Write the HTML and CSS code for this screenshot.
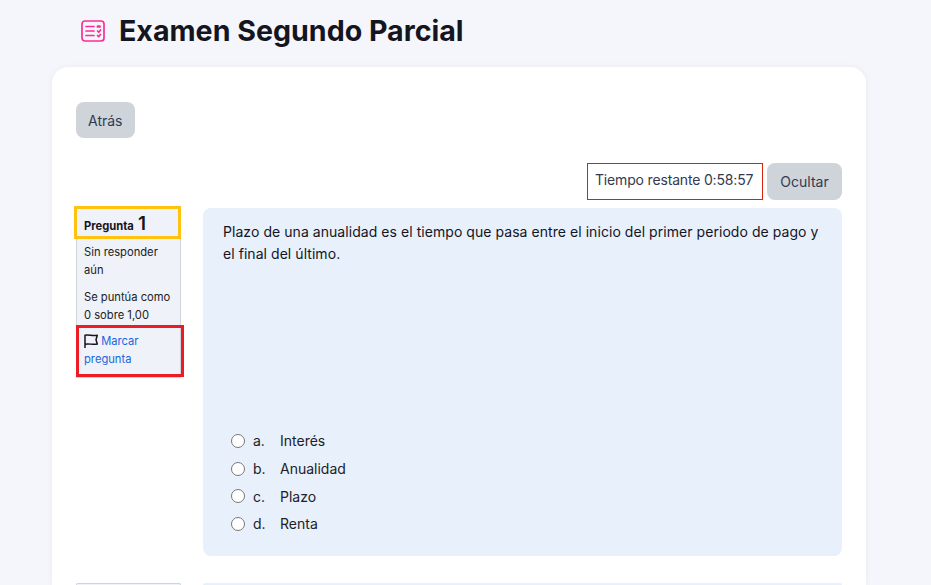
FILE: index.html
```html
<!DOCTYPE html>
<html lang="es">
<head>
  <meta charset="UTF-8">
  <title>Examen Segundo Parcial</title>
  <link rel="stylesheet" href="styles.css">
</head>
<body>
  <header class="page-header">
    <svg class="page-icon" viewBox="0 0 24 24" fill="none" stroke="#fb2d96" stroke-width="1.700" stroke-linecap="round" stroke-linejoin="round">
      <rect x="1" y="2" width="22" height="20" rx="3"/>
      <path d="M5 7.500h8M5 12h8M5 16.500h8"/>
      <path d="M16.500 7h2.500v1h-2.500z" fill="#fb2d96"/>
      <path d="M16.500 12l1.200 1.200 1.800-2.200M16.500 16.500l1.200 1.200 1.800-2.200"/>
    </svg>
    <h1>Examen Segundo Parcial</h1>
  </header>

  <main class="card">
    <div class="back-row">
      <a class="btn" href="#">Atrás</a>
    </div>

    <div class="timer-row">
      <div class="timer">Tiempo restante 0:58:57</div>
      <button class="btn" type="button">Ocultar</button>
    </div>

    <section class="question">
      <div class="info">
        <div class="info-head">
          <span class="info-label">Pregunta</span> <span class="info-num">1</span>
          <span class="mark mark-yellow"></span>
        </div>
        <div class="info-text">
          <p>Sin responder aún</p>
          <p>Se puntúa como 0 sobre 1,00</p>
        </div>
        <div class="info-flag">
          <svg class="flag" viewBox="0 0 14 14" fill="none" stroke="#14151f" stroke-width="1.500" stroke-linejoin="round">
            <path d="M1 14V1.200C5 .2 9 2.500 13.300 1.200L12 5.800l1.300 4.200C9 11.300 5 9 1 10.200"/>
          </svg>
          <a href="#">Marcar pregunta</a>
          <span class="mark mark-red"></span>
        </div>
      </div>

      <div class="content">
        <p class="q-text">Plazo de una anualidad es el tiempo que pasa entre el inicio del primer periodo de pago y el final del último.</p>
        <div class="answers">
          <label class="answer"><input type="radio" name="q1"><span class="letter">a.</span>Interés</label>
          <label class="answer"><input type="radio" name="q1"><span class="letter">b.</span>Anualidad</label>
          <label class="answer"><input type="radio" name="q1"><span class="letter">c.</span>Plazo</label>
          <label class="answer"><input type="radio" name="q1"><span class="letter">d.</span>Renta</label>
        </div>
      </div>
    </section>

    <section class="question question-next">
      <div class="info info-next"></div>
      <div class="content content-next"></div>
    </section>
  </main>
</body>
</html>
```

FILE: styles.css
```css
html, body {
  height: 585px;
  overflow: hidden;
}

body {
  margin: 0;
  background: #f5f6fb;
  font-family: 'Inter', sans-serif;
  font-size: 14px;
  color: #1d2125;
}

.page-header {
  display: flex;
  align-items: center;
  gap: 14px;
  height: 67px;
  padding-left: 81px;
  padding-bottom: 6px;
  box-sizing: border-box;
}

.page-icon {
  width: 24px;
  height: 24px;
}

.page-header h1 {
  margin: 0;
  font-size: 28.600px;
  font-weight: 700;
  color: #14151f;
}

.card {
  width: 814px;
  margin-left: 52px;
  padding: 35px 24px 0;
  box-sizing: border-box;
  height: 518px;
  overflow: hidden;
  background: #fff;
  border-radius: 16px 16px 0 0;
  box-shadow: 0 0 6px rgba(30, 40, 80, 0.05);
}

.btn {
  display: inline-block;
  padding: 0 12px;
  height: 36px;
  line-height: 37px;
  background: #ced4da;
  color: #343a50;
  font-family: inherit;
  font-size: 14px;
  border: none;
  border-radius: 8px;
  text-decoration: none;
  box-sizing: border-box;
}

.timer-row {
  display: flex;
  justify-content: flex-end;
  gap: 4px;
  margin-top: 25px;
}

.timer-row .btn {
  height: 37px;
  line-height: 37px;
  width: 75px;
  padding: 0;
}

.timer {
  width: 176px;
  height: 37px;
  line-height: 32px;
  box-sizing: border-box;
  padding-left: 7px;
  border: 1px solid #d9230f;
  color: #343a50;
  letter-spacing: -0.170px;
}

.question {
  display: flex;
  gap: 22px;
  margin-top: 8px;
  margin-bottom: 27px;
}

.question-next {
  margin-bottom: 0;
}

.info {
  width: 105px;
  align-self: flex-start;
  box-sizing: border-box;
  background: #eff2f8;
  border: 1px solid #ced4da;
  border-top: none;
  font-size: 11.200px;
  line-height: 18px;
}

.info-head {
  position: relative;
  height: 30px;
  padding: 9px 7px 0;
  box-sizing: border-box;
  border-bottom: 1px solid #ced4da;
  white-space: nowrap;
}

.info-label {
  font-weight: 700;
  color: #14151f;
}

.info-num {
  margin-left: 1px;
  font-size: 19px;
  line-height: 14px;
  font-weight: 600;
  color: #14151f;
}

.info-text {
  padding: 5px 7px 1px;
}

.info-text p {
  margin: 0 0 9px;
}

.info-text p:last-child {
  margin-bottom: 0;
}

.info-flag {
  position: relative;
  padding: 7px 7px 9px;
}

.info-flag a {
  color: #1a66dd;
  text-decoration: none;
}

.flag {
  width: 14px;
  height: 14px;
  vertical-align: -3px;
}

.mark {
  position: absolute;
  box-sizing: border-box;
  border-style: solid;
  border-width: 3px;
}

.mark-yellow {
  left: -3px;
  right: -1px;
  top: -2px;
  bottom: -2px;
  border-color: #ffc20e;
}

.mark-red {
  left: -1px;
  right: -4px;
  top: 0;
  bottom: 0;
  border-color: #ed1c24;
}

.content {
  flex: 1;
  height: 348px;
  box-sizing: border-box;
  padding: 13px 20px 0;
  background: #e8f0fb;
  border-radius: 8px;
  font-size: 14px;
}

.q-text {
  margin: 0;
  line-height: 22px;
  letter-spacing: 0.055px;
  color: #14151f;
}

.answers {
  margin-top: 162px;
}

.answer {
  display: flex;
  align-items: center;
  height: 27.700px;
  color: #1d2125;
}

.answer input {
  width: 14px;
  height: 14px;
  margin: 0 8px;
}

.letter {
  width: 27px;
}

.info-next {
  height: 2px;
  border-top: 1px solid #ced4da;
  border-bottom: none;
  border-radius: 4px 4px 0 0;
}

.content-next {
  height: 2px;
  padding: 0;
  border-radius: 8px 8px 0 0;
}
```
